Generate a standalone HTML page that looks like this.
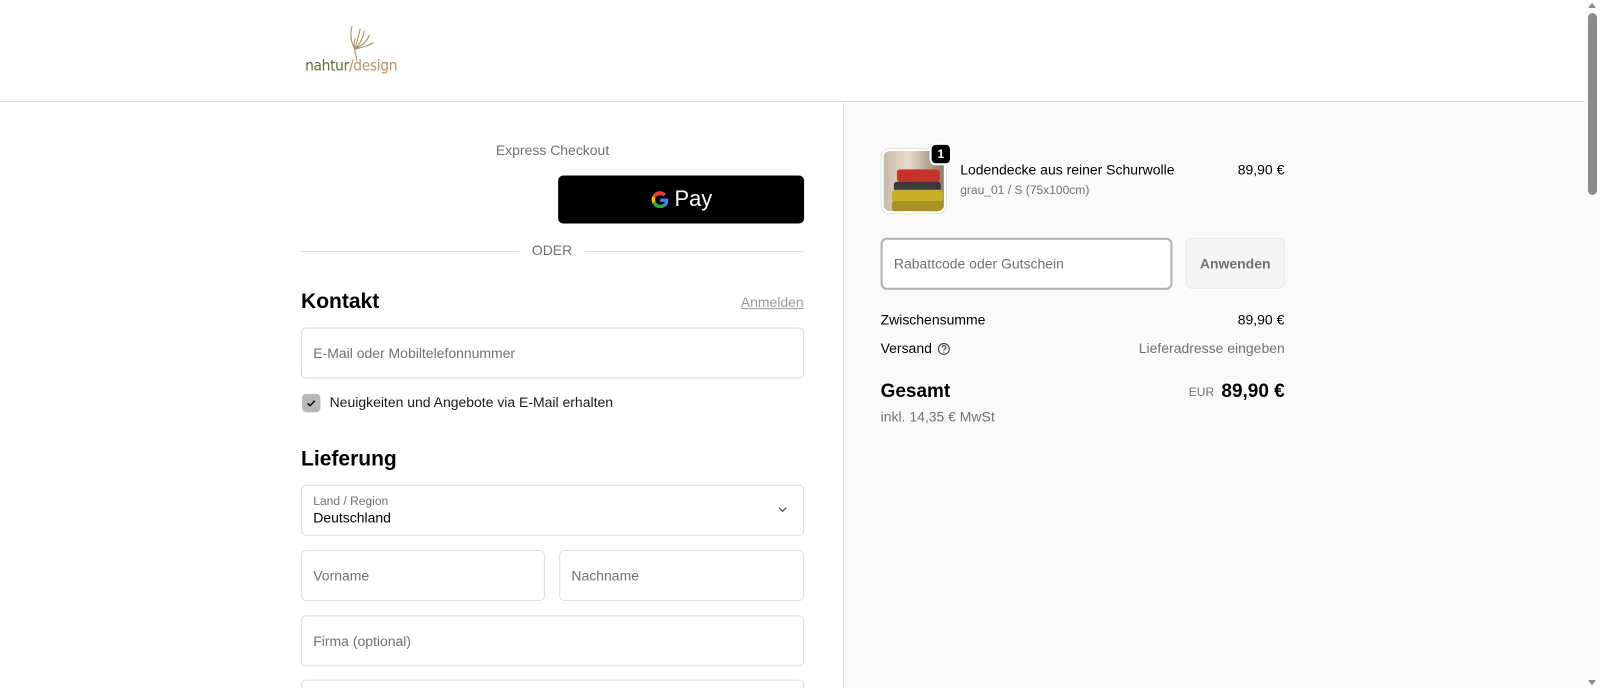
<!DOCTYPE html>
<html style="overflow:hidden;height:688px"><head><meta charset="utf-8"><style>
*{box-sizing:border-box;margin:0;padding:0}
body{width:1600px;height:688px;overflow:hidden;font-family:"Liberation Sans",sans-serif;background:#fff;position:relative;color:#000}
#clip{position:absolute;left:0;top:0;width:1600px;height:688px;overflow:hidden}
.a{position:absolute}
#w{position:absolute;left:0;top:0;width:1568px;height:674px;transform:scale(1.0204);transform-origin:0 0}
.inp{position:absolute;border:1px solid #dedede;border-radius:5px;background:#fff;font-size:13.7px;color:#707070;padding-left:11px;display:flex;align-items:center}
</style></head><body>
<div id="clip">
<div id="w">
<div class="a" style="left:0;top:0;width:1600px;height:100px;border-bottom:1px solid #dedede;background:#fff"></div>
<svg class="a" style="left:330px;top:24px" width="40" height="38" viewBox="0 0 40 38" fill="none" stroke="#a08a5c" stroke-width="1"><path d="M20 36 C18 28 16 20 18 14 M18 24 C14 18 13 10 15 2 M18 24 C20 16 22 10 23 4 M18 24 C24 18 26 12 27 6 M18 24 C26 20 30 16 32 10 M18 24 C28 22 32 20 36 18"/></svg>
<div class="a" style="left:299px;top:55px;font-size:15px;font-family:'DejaVu Sans Condensed','Liberation Sans',sans-serif;letter-spacing:-0.3px"><span style="color:#5b6b3a">nahtur</span><span style="color:#c09060">/design</span></div>

<div class="a" style="left:826px;top:101px;width:800px;height:600px;background:#fafafa;border-left:1px solid #dedede"></div>

<div class="a" style="left:295px;top:140px;width:493px;text-align:center;font-size:13.7px;color:#707070">Express Checkout</div>
<div class="a" style="left:547px;top:172px;width:241px;height:47px;background:#000;border-radius:5px;display:flex;align-items:center;justify-content:center;color:#fff;font-size:21.5px">
<svg width="20" height="20" viewBox="0 0 20 20" style="margin-right:4px"><path d="M18 10.2c0-.6-.1-1.2-.2-1.7H10v3.3h4.5a4 4 0 0 1-1.7 2.5v2.1h2.7c1.6-1.5 2.5-3.6 2.5-6.2z" fill="#4285f4"/><path d="M10 18c2.3 0 4.1-.8 5.5-2.1l-2.7-2.1c-.7.5-1.7.8-2.8.8-2.2 0-4-1.5-4.7-3.4H2.5v2.2A8 8 0 0 0 10 18z" fill="#34a853"/><path d="M5.3 11.2a4.8 4.8 0 0 1 0-3.1V5.9H2.5a8 8 0 0 0 0 7.5z" fill="#fbbc04"/><path d="M10 5.2c1.2 0 2.3.4 3.2 1.2l2.4-2.4A8 8 0 0 0 2.5 5.9l2.8 2.2C6 6.7 7.8 5.2 10 5.2z" fill="#ea4335"/></svg>Pay</div>
<div class="a" style="left:295px;top:246px;width:213px;border-top:1px solid #dedede"></div>
<div class="a" style="left:574px;top:246px;width:214px;border-top:1px solid #dedede"></div>
<div class="a" style="left:508px;top:238px;width:66px;text-align:center;font-size:13.7px;color:#707070">ODER</div>

<div class="a" style="left:295px;top:284px;font-size:20.6px;font-weight:bold">Kontakt</div>
<div class="a" style="left:726px;top:289px;font-size:13.7px;color:#9a9a9a;text-decoration:underline">Anmelden</div>
<div class="inp" style="left:295px;top:321px;width:493px;height:50px">E-Mail oder Mobiltelefonnummer</div>
<div class="a" style="left:296px;top:386px;width:18px;height:18px;background:#b8b8b8;border-radius:4px"></div>
<svg class="a" style="left:299px;top:389px" width="12" height="12" viewBox="0 0 12 12"><path d="M2.5 6.3l2.3 2.3 4.7-4.9" stroke="#000" stroke-width="1.4" fill="none"/></svg>
<div class="a" style="left:323px;top:387px;font-size:13.7px;color:#1a1a1a">Neuigkeiten und Angebote via E-Mail erhalten</div>

<div class="a" style="left:295px;top:438px;font-size:20.6px;font-weight:bold">Lieferung</div>
<div class="inp" style="left:295px;top:475px;width:493px;height:50px;display:block;padding-top:8px">
<div style="font-size:11.8px;color:#707070">Land / Region</div><div style="font-size:13.7px;color:#000;margin-top:2px">Deutschland</div></div>
<svg class="a" style="left:762px;top:495px" width="10" height="8" viewBox="0 0 10 8"><path d="M1.5 2.5l3.5 3.5 3.5-3.5" stroke="#444" stroke-width="1.2" fill="none"/></svg>
<div class="inp" style="left:295px;top:539px;width:239px;height:50px">Vorname</div>
<div class="inp" style="left:548px;top:539px;width:240px;height:50px">Nachname</div>
<div class="inp" style="left:295px;top:603px;width:493px;height:50px">Firma (optional)</div>
<div class="inp" style="left:295px;top:666px;width:493px;height:50px"></div>

<div class="a" style="left:864px;top:146px;width:63px;height:63px;border-radius:8px;border:2px solid #fff;box-shadow:0 0 0 1px #e0e0e0;overflow:hidden;background:linear-gradient(90deg,#c9b8a6,#e8ddd0 40%,#8a7a6a)">
<div class="a" style="left:13px;top:18px;width:42px;height:12px;background:#c8322a;border-radius:3px"></div>
<div class="a" style="left:10px;top:30px;width:46px;height:10px;background:#3a3a3a;border-radius:3px"></div>
<div class="a" style="left:8px;top:38px;width:50px;height:12px;background:#c9b126;border-radius:3px"></div>
<div class="a" style="left:8px;top:49px;width:50px;height:10px;background:#a89220;border-radius:3px"></div>
</div>
<div class="a" style="left:911px;top:140px;width:22px;height:22px;background:#000;color:#fff;border-radius:6px;border:2px solid #fff;font-size:11.8px;font-weight:bold;display:flex;align-items:center;justify-content:center">1</div>
<div class="a" style="left:941px;top:159px;font-size:13.7px">Lodendecke aus reiner Schurwolle</div>
<div class="a" style="left:941px;top:179px;font-size:11.8px;color:#707070">grau_01 / S (75x100cm)</div>
<div class="a" style="left:1213px;top:159px;font-size:13.7px">89,90 €</div>

<div class="inp" style="left:863px;top:233px;width:286px;height:51px;border:2px solid #b0b0b0;border-radius:6px">Rabattcode oder Gutschein</div>
<div class="a" style="left:1162px;top:233px;width:97px;height:50px;border:1px solid #e6e6e6;border-radius:6px;background:#f5f5f5;font-size:13.7px;font-weight:bold;color:#707070;display:flex;align-items:center;justify-content:center">Anwenden</div>

<div class="a" style="left:863px;top:306px;font-size:13.7px">Zwischensumme</div>
<div class="a" style="left:1213px;top:306px;font-size:13.7px">89,90 €</div>
<div class="a" style="left:863px;top:334px;font-size:13.7px">Versand</div>
<svg class="a" style="left:918px;top:335px" width="14" height="14" viewBox="0 0 14 14"><circle cx="7" cy="7" r="5.3" fill="none" stroke="#333" stroke-width="1"/><path d="M5.3 5.6a1.8 1.8 0 1 1 2.4 1.6c-.5.2-.7.5-.7 1V8.6" fill="none" stroke="#333" stroke-width="1"/><circle cx="7" cy="10.2" r=".6" fill="#333"/></svg>
<div class="a" style="left:1116px;top:334px;font-size:13.7px;color:#707070">Lieferadresse eingeben</div>
<div class="a" style="left:863px;top:372px;font-size:18.6px;font-weight:bold">Gesamt</div>
<div class="a" style="left:1165px;top:377px;font-size:11.8px;color:#707070">EUR</div>
<div class="a" style="left:1197px;top:372px;font-size:18.6px;font-weight:bold">89,90 €</div>
<div class="a" style="left:863px;top:401px;font-size:13.7px;color:#707070">inkl. 14,35 € MwSt</div>
</div>

<div class="a" style="left:1585px;top:0;width:15px;height:688px;background:#fafafa"></div>
<div class="a" style="left:1588px;top:13px;width:9px;height:182px;background:#8a8a8a;border-radius:5px"></div>
<div class="a" style="left:1588px;top:3px;width:0;height:0;border-left:4.5px solid transparent;border-right:4.5px solid transparent;border-bottom:5px solid #8a8a8a"></div>
<div class="a" style="left:1588px;top:680px;width:0;height:0;border-left:4.5px solid transparent;border-right:4.5px solid transparent;border-top:5px solid #8a8a8a"></div>
</div>
</body></html>
